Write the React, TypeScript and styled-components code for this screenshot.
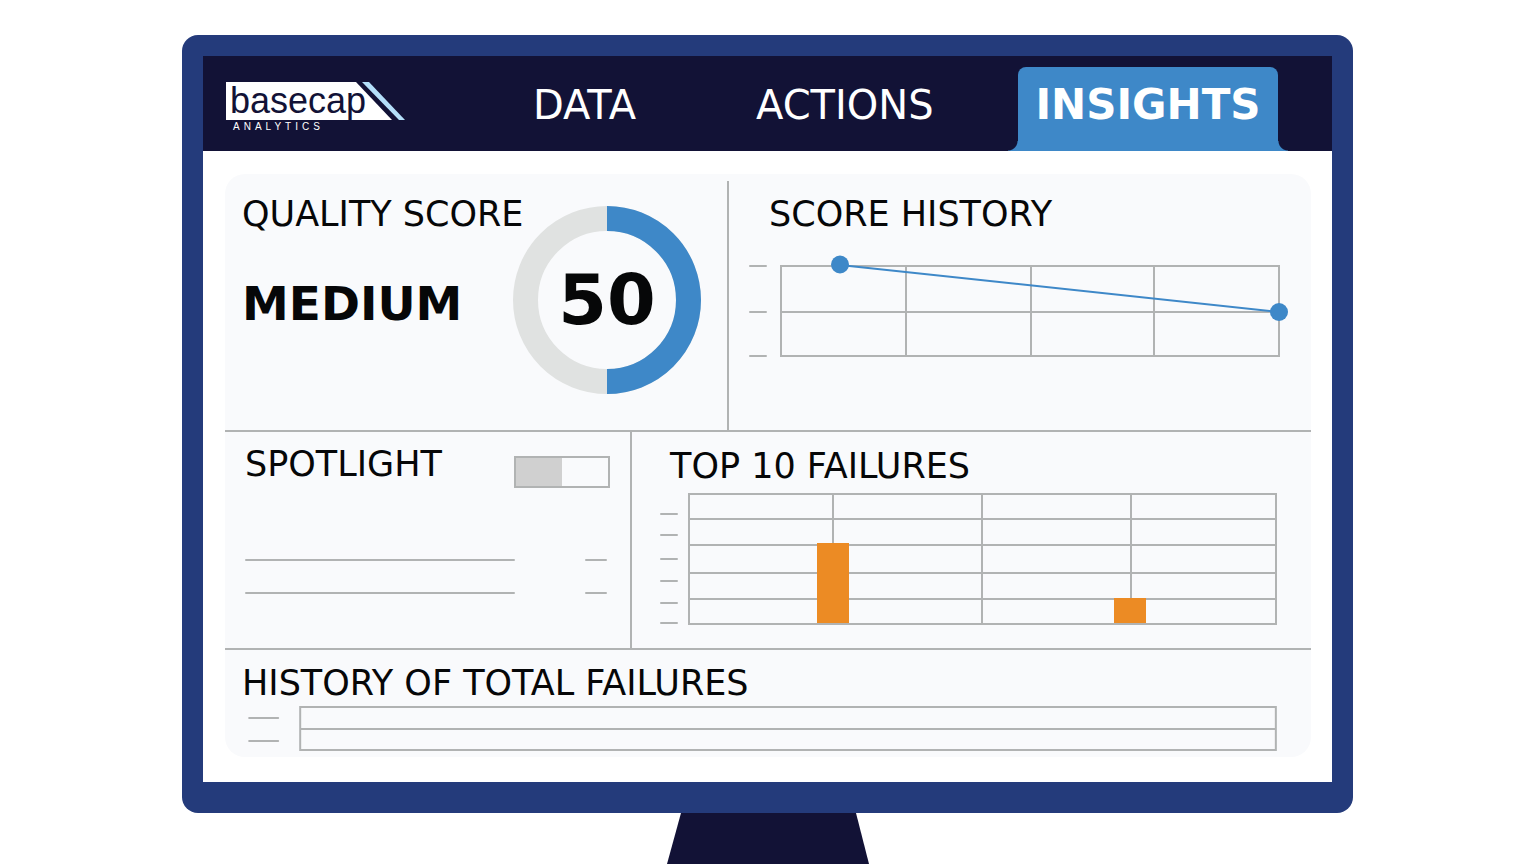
import React from "react";
import styled, { createGlobalStyle } from "styled-components";

const colors = {
  frame: "#243b7b",
  ink: "#121236",
  blue: "#3e88c8",
  line: "#b1b3b3",
  ring: "#e0e2e1",
  orange: "#ec8b24",
  panel: "#f9fafc",
  text: "#060708",
};

const GlobalStyle = createGlobalStyle`
  * { box-sizing: border-box; }
  body {
    margin: 0;
    background: #fff;
    color: ${colors.text};
    font-family: "DejaVu Sans", Verdana, sans-serif;
  }
`;

const Page = styled.div`
  min-height: 100vh;
  padding: 35px 183px 0 182px;
  overflow: hidden;
`;

const Monitor = styled.div`
  background: ${colors.frame};
  border-radius: 16px;
  padding: 21px 21px 31px;
`;

const Screen = styled.div`
  background: #fff;
`;

const Header = styled.header`
  display: flex;
  align-items: flex-end;
  gap: 126px;
  height: 95px;
  padding: 0 54px 0 22px;
  background: ${colors.ink};
`;

const LogoLink = styled.a`
  display: block;
  flex: none;
  height: 70px;
`;

const Nav = styled.nav`
  flex: 1;
  display: grid;
  grid-template-columns: 223fr 262fr 260fr;
`;

const NavLink = styled.a<{ $active?: boolean }>`
  position: relative;
  height: 84px;
  padding-top: 14px;
  border-radius: 8px 8px 0 0;
  background: ${(p) => (p.$active ? colors.blue : "transparent")};
  color: #fff;
  font-size: ${(p) => (p.$active ? 42 : 40)}px;
  font-weight: ${(p) => (p.$active ? 700 : 400)};
  line-height: 48px;
  text-align: ${(p) => (p.$active ? "center" : "left")};
  text-decoration: none;

  &::before,
  &::after {
    content: ${(p) => (p.$active ? '""' : "none")};
    position: absolute;
    bottom: 0;
    width: 10px;
    height: 10px;
  }
  &::before {
    right: 100%;
    background: radial-gradient(circle at 0 0, transparent 9px, ${colors.blue} 10px);
  }
  &::after {
    left: 100%;
    background: radial-gradient(circle at 100% 0, transparent 9px, ${colors.blue} 10px);
  }
`;

const Content = styled.main`
  padding: 23px 21px 25px 22px;
`;

const Panel = styled.div`
  background: ${colors.panel};
  border-radius: 20px;
`;

const Row = styled.div<{ $columns: string; $height: number }>`
  display: grid;
  grid-template-columns: ${(p) => p.$columns};
  min-height: ${(p) => p.$height}px;

  & + & {
    border-top: 2px solid ${colors.line};
  }
`;

const Cell = styled.section<{ $pad: string; $divided?: boolean; $inset?: number }>`
  min-width: 0;
  margin-top: ${(p) => p.$inset ?? 0}px;
  padding: ${(p) => p.$pad};
  border-left: ${(p) => (p.$divided ? `2px solid ${colors.line}` : "none")};
`;

const Title = styled.h2<{ $indent?: number }>`
  margin: 0;
  padding-left: ${(p) => p.$indent ?? 0}px;
  font-size: 35px;
  font-weight: 400;
  line-height: 40px;
  white-space: nowrap;
`;

const Split = styled.div`
  display: flex;
  justify-content: space-between;
`;

const ScoreText = styled.div`
  flex: 1;
  min-width: 0;
`;

const Rating = styled.p`
  margin: 40px 0 0;
  font-size: 47px;
  font-weight: 700;
  line-height: 60px;
`;

const Gauge = styled.div`
  flex: none;
  display: grid;
  place-items: center;
  margin-top: 12px;

  & > * {
    grid-area: 1 / 1;
  }
`;

const Score = styled.strong`
  font-size: 70px;
  line-height: 80px;
`;

const Chart = styled.svg<{ $gap: number }>`
  display: block;
  width: 100%;
  height: auto;
  margin-top: ${(p) => p.$gap}px;
`;

const Switch = styled.input`
  appearance: none;
  width: 96px;
  height: 32px;
  margin: 12px 0 0;
  border: 2px solid ${colors.line};
  background: linear-gradient(90deg, #d0d0d0 50%, ${colors.panel} 50%);
`;

const Entries = styled.div`
  display: grid;
  gap: 31px;
  margin: 71px 3px 0 0;
`;

const Entry = styled.div`
  display: flex;
  justify-content: space-between;
`;

const Bar = styled.span<{ $width: string }>`
  width: ${(p) => p.$width};
  height: 2px;
  border-radius: 1px;
  background: ${colors.line};
`;

const Stand = styled.svg`
  display: block;
  margin: 0 auto;
`;

function Logo() {
  return (
    <svg width="182" height="70" viewBox="0 0 182 70" role="img" aria-label="basecap analytics">
      <path d="M1 1H131L167 39H1Z" fill="#fff" />
      <path d="M137 1H144L180 39H174Z" fill="#b4dffa" />
      <text x="5" y="32" fontFamily="Liberation Sans, Arial, sans-serif" fontSize="36" fill={colors.ink}>
        basecap
      </text>
      <text
        x="8"
        y="49"
        fontFamily="Liberation Sans, Arial, sans-serif"
        fontSize="10"
        letterSpacing="4"
        fill="#fff"
      >
        ANALYTICS
      </text>
    </svg>
  );
}

function ScoreHistory() {
  return (
    <Chart $gap={21} viewBox="0 0 540 104" aria-hidden="true">
      <g fill="none" stroke={colors.line} strokeWidth="2">
        <path strokeLinecap="round" d="M1 11H17M1 57H17M1 101H17" />
        <path d="M32 11H530V101H32ZM32 57H530M157 11V101M282 11V101M405 11V101" />
      </g>
      <path d="M91 10L530 57" stroke={colors.blue} strokeWidth="2" />
      <circle cx="91" cy="9.5" r="9" fill={colors.blue} />
      <circle cx="530" cy="57" r="9" fill={colors.blue} />
    </Chart>
  );
}

function TopFailures() {
  return (
    <Chart $gap={6} viewBox="0 0 617 134" aria-hidden="true">
      <g fill="none" stroke={colors.line} strokeWidth="2">
        <path
          strokeLinecap="round"
          d="M1 22H17M1 43H17M1 67H17M1 89H17M1 111H17M1 131H17"
        />
        <path d="M29 2H616V132H29ZM29 27H616M29 53H616M29 81H616M29 107H616M173 2V132M322 2V132M471 2V132" />
      </g>
      <path d="M157 51H189V131H157ZM454 106H486V131H454Z" fill={colors.orange} />
    </Chart>
  );
}

function FailureHistory() {
  return (
    <Chart $gap={2} viewBox="0 0 1034 46" aria-hidden="true">
      <g fill="none" stroke={colors.line} strokeWidth="2">
        <path strokeLinecap="round" d="M7 13H36M7 36H36" />
        <path d="M58 2H1033V45H58ZM58 24H1033" />
      </g>
    </Chart>
  );
}

export default function App() {
  return (
    <Page>
      <GlobalStyle />
      <Monitor>
        <Screen>
          <Header>
            <LogoLink href="#">
              <Logo />
            </LogoLink>
            <Nav>
              <NavLink href="#data">DATA</NavLink>
              <NavLink href="#actions">ACTIONS</NavLink>
              <NavLink href="#insights" $active aria-current="page">
                INSIGHTS
              </NavLink>
            </Nav>
          </Header>
          <Content>
            <Panel>
              <Row $columns="502fr 584fr" $height={256}>
                <Cell $pad="20px 26px 0 17px">
                  <Split>
                    <ScoreText>
                      <Title>QUALITY SCORE</Title>
                      <Rating>MEDIUM</Rating>
                    </ScoreText>
                    <Gauge>
                      <svg width="188" height="188" viewBox="0 0 188 188" aria-hidden="true">
                        <circle cx="94" cy="94" r="81.5" fill="none" stroke={colors.ring} strokeWidth="25" />
                        <path d="M94 12.5A81.5 81.5 0 0 1 94 175.5" fill="none" stroke={colors.blue} strokeWidth="25" />
                      </svg>
                      <Score>50</Score>
                    </Gauge>
                  </Split>
                </Cell>
                <Cell $pad="13px 22px 0 20px" $divided $inset={7}>
                  <Title $indent={20}>SCORE HISTORY</Title>
                  <ScoreHistory />
                </Cell>
              </Row>
              <Row $columns="405fr 681fr" $height={218}>
                <Cell $pad="12px 20px 0 20px">
                  <Split>
                    <Title as="label" htmlFor="spotlight">
                      SPOTLIGHT
                    </Title>
                    <Switch id="spotlight" type="checkbox" role="switch" />
                  </Split>
                  <Entries>
                    <Entry>
                      <Bar $width="270px" />
                      <Bar $width="22px" />
                    </Entry>
                    <Entry>
                      <Bar $width="270px" />
                      <Bar $width="22px" />
                    </Entry>
                  </Entries>
                </Cell>
                <Cell $pad="14px 34px 0 28px" $divided>
                  <Title $indent={10}>TOP 10 FAILURES</Title>
                  <TopFailures />
                </Cell>
              </Row>
              <Row $columns="1fr" $height={109}>
                <Cell $pad="13px 34px 0 17px">
                  <Title>HISTORY OF TOTAL FAILURES</Title>
                  <FailureHistory />
                </Cell>
              </Row>
            </Panel>
          </Content>
        </Screen>
      </Monitor>
      <Stand width="204" height="51" viewBox="0 0 204 51" aria-hidden="true">
        <path d="M15 0H190L203 51H1Z" fill={colors.ink} />
      </Stand>
    </Page>
  );
}
